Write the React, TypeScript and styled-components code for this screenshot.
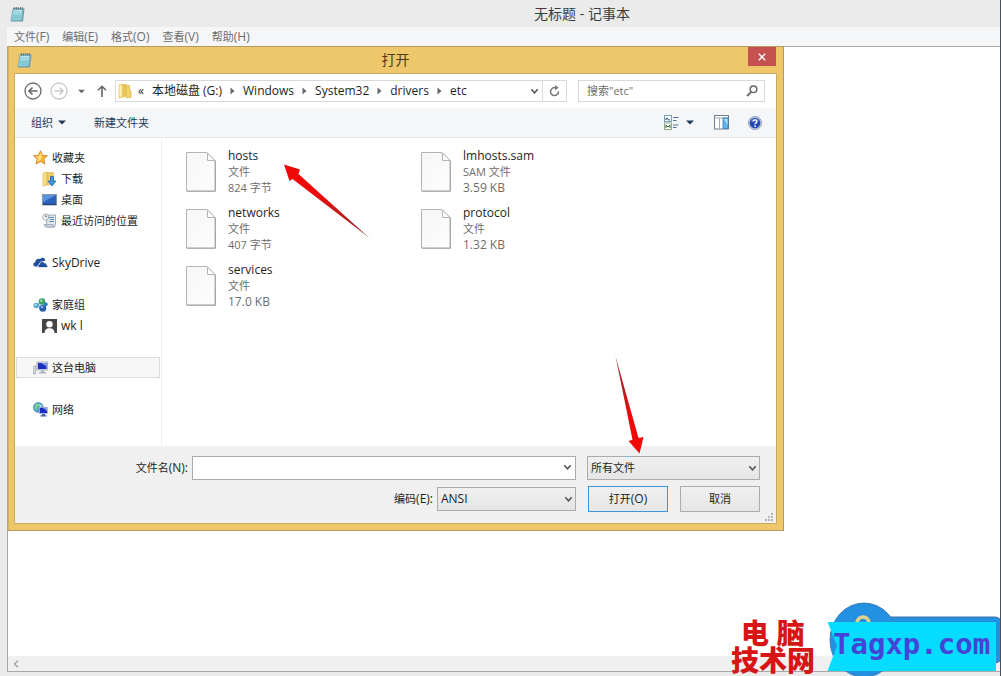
import React from "react";
import styled, { createGlobalStyle } from "styled-components";

const GlobalStyle = createGlobalStyle`
  *, *::before, *::after { box-sizing: border-box; }
  body {
    margin: 0;
    font-family: "Open Sans", "Noto Sans CJK SC", sans-serif;
    font-size: 12px;
    line-height: 16px;
    color: #1e1e1e;
  }
  button, input, select { font: inherit; color: inherit; margin: 0; }
  svg { display: block; flex: none; }
  ul { list-style: none; margin: 0; padding: 0; }
  h1, h2 { margin: 0; font-weight: 400; font-size: 14px; }
`;

/* ---------- Notepad window ---------- */

const Desktop = styled.div`
  position: relative;
  display: flex;
  flex-direction: column;
  min-height: 100vh;
  padding: 0 0 4px 7px;
  background: #ebebeb;
  border-right: 1px solid #4a5058;
  overflow: hidden;
`;

const WindowTitle = styled.header`
  display: grid;
  grid-template-columns: 154px 1fr;
  align-items: center;
  height: 27px;
  padding-left: 3px;
  h1 { text-align: center; color: #3c3c3c; line-height: 26px; }
`;

const MenuBar = styled.nav`
  display: flex;
  gap: 13px;
  height: 19px;
  padding-left: 7px;
  background: #f5f6f7;
`;

const MenuItem = styled.button`
  padding: 0;
  border: 0;
  background: none;
  color: #6d6d6d;
  font-size: 11px;
  line-height: 19px;
`;

const Key = styled.span`
  font-size: 12px;
`;

const Editor = styled.main`
  flex: 1;
  display: flex;
  flex-direction: column;
  justify-content: flex-end;
  background: #fff;
  border: 1px solid #a8a8a8;
  border-right: 0;
`;

const ScrollBar = styled.div`
  display: flex;
  align-items: center;
  height: 15px;
  padding-left: 5px;
  background: #f0f0f0;
`;

/* ---------- Open dialog ---------- */

const Dialog = styled.section`
  position: absolute;
  top: 46px;
  left: 8px;
  width: min(776px, calc(100% - 16px));
  padding: 0 7px 7px 6px;
  background: #efc76b;
  border: 1px solid #b39a5e;
  border-left-color: #d6b25f;
`;

const DialogTitle = styled.header`
  display: grid;
  grid-template-columns: 28px 1fr 28px;
  height: 26px;
  h2 { text-align: center; line-height: 26px; color: #4a3a12; }
`;

const TitleIcon = styled.span`
  display: flex;
  align-items: center;
  padding-left: 2px;
`;

const CloseButton = styled.button`
  display: flex;
  align-items: center;
  justify-content: center;
  height: 19px;
  padding: 0;
  border: 0;
  background: #c75050;
`;

const Client = styled.div`
  background: #fff;
  border: 1px solid #c9aa62;
  margin: 0 -1px -1px;
`;

const AddressRow = styled.div`
  display: flex;
  align-items: center;
  height: 34px;
  padding: 0 11px 0 8px;
`;

const IconButton = styled.button<{ $w: number }>`
  display: flex;
  align-items: center;
  justify-content: center;
  width: ${(p) => p.$w}px;
  height: 20px;
  padding: 0;
  border: 0;
  background: none;
`;

const AddressBox = styled.div`
  flex: 1;
  display: flex;
  align-items: center;
  height: 22px;
  margin-left: 4px;
  border: 1px solid #d9d9d9;
  padding-left: 2px;
`;

const Crumbs = styled.ol`
  flex: 1;
  display: flex;
  align-items: center;
  margin: 0;
  padding: 0 0 0 6px;
  list-style: none;
  li { display: flex; align-items: center; }
`;

const Crumb = styled.a`
  padding: 0 8px;
  color: #1e1e1e;
  text-decoration: none;
  white-space: nowrap;
`;

const RefreshButton = styled(IconButton)`
  border-left: 1px solid #d9d9d9;
`;

const SearchBox = styled.label`
  display: flex;
  align-items: center;
  width: 187px;
  height: 22px;
  margin-left: 11px;
  padding: 0 6px 0 8px;
  border: 1px solid #d9d9d9;
  input {
    flex: 1;
    min-width: 0;
    padding: 0;
    border: 0;
    outline: 0;
    background: none;
    font-size: 11px;
  }
  input::placeholder { color: #6d6d6d; opacity: 1; }
`;

const ToolBar = styled.div`
  display: flex;
  align-items: center;
  height: 30px;
  padding: 0 14px 0 16px;
  background: #f5f6f7;
  border-bottom: 1px solid #e8e9eb;
`;

const ToolButton = styled.button`
  display: flex;
  align-items: center;
  gap: 5px;
  margin-right: 28px;
  padding: 0;
  border: 0;
  background: none;
  color: #1e395b;
  font-size: 11px;
`;

const ToolGroup = styled.div`
  display: flex;
  align-items: center;
  margin-left: auto;
`;

const Body = styled.div`
  display: flex;
  min-height: 308px;
`;

const SideBar = styled.nav`
  width: 147px;
  padding-top: 9px;
  border-right: 1px solid #f0f0f0;
`;

const SideGroup = styled.ul`
  & + & { margin-top: 21px; }
`;

const SideItem = styled.a<{ $level?: number; $selected?: boolean; $latin?: boolean }>`
  display: flex;
  align-items: center;
  gap: 4px;
  height: 21px;
  margin: 0 1px;
  padding-left: ${(p) => (p.$level ? 26 : 17)}px;
  color: #1e1e1e;
  font-size: ${(p) => (p.$latin ? 12 : 11)}px;
  text-decoration: none;
  white-space: nowrap;
  outline: ${(p) => (p.$selected ? "1px solid #dcdcdc" : "none")};
  outline-offset: -1px;
  background: ${(p) => (p.$selected ? "#f7f7f7" : "none")};
`;

const FileGrid = styled.ul`
  flex: 1;
  display: grid;
  grid-template-columns: repeat(auto-fill, 234px);
  grid-auto-rows: 51px;
  gap: 6px 1px;
  padding: 8px 0 0 24px;
`;

const FileTile = styled.li`
  display: flex;
  align-items: center;
  gap: 12px;
`;

const FileText = styled.div`
  line-height: 16px;
`;

const FileMeta = styled.div<{ $han?: boolean }>`
  height: 16px;
  color: #6d6d6d;
  font-size: ${(p) => (p.$han ? 11 : 12)}px;
`;

const Footer = styled.form`
  display: flex;
  flex-direction: column;
  gap: 6px;
  padding: 10px 16px 11px 0;
  background: #f0f0f0;
`;

const FooterRow = styled.div`
  display: flex;
  align-items: center;
  justify-content: flex-end;
`;

const FieldLabel = styled.label<{ $w: number }>`
  width: ${(p) => p.$w}px;
  margin-right: 4px;
  text-align: right;
  font-size: 11px;
  white-space: nowrap;
`;

const Combo = styled.div`
  flex: 1;
  display: flex;
  height: 24px;
  background: #fff;
  border: 1px solid #ababab;
  input { flex: 1; min-width: 0; border: 0; outline: 0; padding: 0 3px; background: none; }
`;

const SelectBox = styled.div<{ $w: number; $han?: boolean }>`
  position: relative;
  width: ${(p) => p.$w}px;
  height: 24px;
  select {
    width: 100%;
    height: 100%;
    padding: 0 3px;
    appearance: none;
    border: 1px solid #acacac;
    border-radius: 0;
    background: linear-gradient(#f0f0f0, #e5e5e5);
    font-size: ${(p) => (p.$han ? 11 : 12)}px;
  }
  svg { position: absolute; right: 3px; top: 9px; pointer-events: none; }
`;

const Actions = styled.div`
  display: flex;
  gap: 12px;
`;

const ActionButton = styled.button<{ $primary?: boolean }>`
  width: 80px;
  height: 26px;
  padding: 0;
  border: 1px solid ${(p) => (p.$primary ? "#3c96dc" : "#acacac")};
  background: linear-gradient(#f0f0f0, #e5e5e5);
  font-size: 11px;
`;

const Spacer = styled.span<{ $w: number }>`
  flex: none;
  width: ${(p) => p.$w}px;
`;

const Grip = styled.svg`
  position: absolute;
  right: 9px;
  bottom: 8px;
`;

const Pointers = styled.svg`
  position: absolute;
  top: -1px;
  left: -1px;
  pointer-events: none;
`;

/* ---------- Site badge ---------- */

const SiteBadge = styled.aside`
  position: absolute;
  right: 0;
  bottom: 0;
  display: flex;
  align-items: flex-end;
`;

const SiteName = styled.div`
  margin-right: 13px;
  padding-bottom: 1px;
  color: #d81414;
  font-family: "Liberation Sans", "Noto Sans CJK SC", sans-serif;
  font-size: 28px;
  font-weight: 900;
  line-height: 27px;
  text-align: center;
`;

const SiteUrl = styled.div`
  position: relative;
  width: 172px;
  height: 74px;
  > svg { position: absolute; inset: 0; }
  > span {
    position: relative;
    display: block;
    padding: 25px 0 0 5px;
    color: #4444d6;
    font: bold 29px/34px "DejaVu Sans Mono", monospace;
  }
`;

/* ---------- Drawings ---------- */

const NotepadIcon = () => (
  <svg width="16" height="16" viewBox="0 0 16 16">
    <path d="M3 2.500h11.500L13 15.500H1z" fill="#6f9aa3" />
    <path d="M3 2.500h10.400L11.600 14.500H.8z" fill="#8fd0dd" stroke="#6ba4b2" strokeWidth=".6" />
    <path d="M4 4h8l-.6 4.500H3.300z" fill="#b9e6ee" />
    <path d="M3.800 6h7.800M3.500 8h7.800M3.200 10h7.800M2.900 12h7.800" stroke="#6bb2c3" strokeWidth=".6" />
    <path d="M4.300 1v3M6.300 1v3M8.300 1v3M10.300 1v3M12.300 1v3" stroke="#5d6d70" strokeWidth=".9" />
  </svg>
);

const RoundArrow = ({ flip, color }: { flip?: boolean; color: string }) => (
  <svg width="18" height="18" viewBox="0 0 18 18" fill="none" stroke={color}>
    <circle cx="9" cy="9" r="8" strokeWidth="1.300" />
    <path d={flip ? "M4.500 9h8.500M9.500 5.500L13 9l-3.500 3.500" : "M13.500 9H5M8.500 5.500L5 9l3.500 3.500"} strokeWidth="1.700" />
  </svg>
);

const Caret = ({ color = "#1e395b", w = 8 }: { color?: string; w?: number }) => (
  <svg width={w} height="5" viewBox="0 0 8 5"><path d="M0 .5h8L4 4.500z" fill={color} /></svg>
);

const UpArrow = () => (
  <svg width="10" height="12" viewBox="0 0 10 12" fill="none" stroke="#666" strokeWidth="1.600">
    <path d="M5 12V1.500M1 5.300l4-4 4 4" />
  </svg>
);

const Chevron = () => (
  <svg width="9" height="7" viewBox="0 0 9 7" fill="none" stroke="#555" strokeWidth="1.600">
    <path d="M1.300 1.300l3.200 3.600 3.200-3.600" />
  </svg>
);

const Separator = () => (
  <svg width="5" height="8" viewBox="0 0 5 8"><path d="M.5.5L4.500 4 .5 7.500z" fill="#666" /></svg>
);

const FolderIcon = () => (
  <svg width="14" height="16" viewBox="0 0 14 16">
    <path d="M1 2l4-1v13l-4 1z" fill="#f7e08a" stroke="#d6b048" strokeWidth=".6" />
    <path d="M5 1h3.500v12.500L5 14.500z" fill="#e9c455" />
    <path d="M8.500 2.500h3.200V8H13v6.500H8l.5-1z" fill="#f3d570" stroke="#cfa93f" strokeWidth=".6" />
    <path d="M1.600 3l1.500-.4V13l-1.500.6z" fill="#fdf3bf" />
  </svg>
);

const RefreshIcon = () => (
  <svg width="11" height="12" viewBox="0 0 11 12" fill="none" stroke="#777">
    <path d="M6.500 2.700A4 4 0 1 0 9.500 6.200" strokeWidth="1.500" />
    <path d="M6 0l3.500 2.700L6 5.600z" fill="#777" stroke="none" />
  </svg>
);

const SearchIcon = () => (
  <svg width="12" height="12" viewBox="0 0 12 12" fill="none" stroke="#666">
    <circle cx="7.500" cy="4.300" r="3.300" strokeWidth="1.500" />
    <path d="M5.200 6.800L1 11" strokeWidth="1.800" />
  </svg>
);

const ViewIcon = () => (
  <svg width="15" height="15" viewBox="0 0 15 15">
    <rect x=".5" y=".5" width="7" height="6" fill="#fff" stroke="#7ea3bf" />
    <path d="M2 5V3.500h1.500L4.500 5H6" stroke="#1d3f73" fill="none" />
    <rect x=".5" y="8" width="7" height="6.500" fill="#fff" stroke="#8fae86" />
    <path d="M2 13v-3l2 2 2-2v3" stroke="#3b5c30" fill="none" />
    <path d="M9 2.500h5.500M9 5.500h3.500M9 10h5.500M9 12.500h3.500" stroke="#53779b" />
  </svg>
);

const PaneIcon = () => (
  <svg width="15" height="15" viewBox="0 0 15 15">
    <rect x=".5" y=".5" width="14" height="13.500" fill="#fff" stroke="#6e7e90" />
    <path d="M1 3h13M5.500 3v11" stroke="#a0abb8" />
    <rect x="9" y="3" width="5" height="10.500" fill="#5db6ec" stroke="#3a7db5" strokeWidth=".8" />
    <path d="M10 4h3.500v6z" fill="#b8e2fa" />
  </svg>
);

const HelpIcon = () => (
  <svg width="14" height="14" viewBox="0 0 14 14">
    <circle cx="7" cy="7" r="6.500" fill="#c8d2e4" stroke="#6b7fae" strokeWidth=".7" />
    <circle cx="7" cy="7" r="5.300" fill="#2448ae" />
    <path d="M3 5.500a4.200 4.200 0 0 1 8 0z" fill="#5a80d8" />
    <path d="M5.200 5.600c0-2.300 3.700-2.200 3.700 0 0 1.300-1.800 1.300-1.800 2.700" stroke="#fff" strokeWidth="1.400" fill="none" />
    <circle cx="7.100" cy="10.200" r=".9" fill="#fff" />
  </svg>
);

const StarIcon = () => (
  <svg width="15" height="15" viewBox="0 0 15 15">
    <path d="M7.500.8l2.100 4.500 4.900.5-3.700 3.300 1.100 5-4.400-2.600-4.400 2.600 1.100-5L.5 5.800l4.900-.5z" fill="#f9b233" stroke="#cf7b1a" strokeWidth=".8" />
    <path d="M7.500 2.500L9 6l-1.500 4L4 12l1-3.500-2.500-2L6 6z" fill="#ffdc7c" />
  </svg>
);

const DownloadIcon = () => (
  <svg width="15" height="16" viewBox="0 0 15 16">
    <path d="M1 2l4-1v13l-4 1z" fill="#f7e08a" stroke="#d6b048" strokeWidth=".6" />
    <path d="M5 1.500h6.500V13L5 14z" fill="#eccb66" stroke="#cfa93f" strokeWidth=".5" />
    <path d="M8.500 5.500h3v4.500H14l-4 5-4-5h2.500z" fill="#3f96dd" stroke="#1d64ae" strokeWidth=".8" />
  </svg>
);

const DesktopIcon = () => (
  <svg width="15" height="12" viewBox="0 0 15 12">
    <rect x=".5" y=".5" width="14" height="10.500" fill="#2b62bd" stroke="#8497ab" />
    <path d="M1 1h13L1 8z" fill="#5c93e0" />
    <path d="M1 10.300h13" stroke="#1d3a70" />
  </svg>
);

const RecentIcon = () => (
  <svg width="15" height="15" viewBox="0 0 15 15">
    <path d="M4 2h9.500v9l-1 3H5z" fill="#e3e9ee" stroke="#8a99a6" strokeWidth=".8" />
    <path d="M2 11.500h9l1 2.500H3.500z" fill="#cbd5dd" stroke="#8a99a6" strokeWidth=".7" />
    <path d="M7 4.500h5M8 6.500h4M7 8.500h5" stroke="#5f8db8" />
    <circle cx="3.700" cy="4" r="3.100" fill="#f5f8fa" stroke="#8f9ba6" strokeWidth=".8" />
    <path d="M3.700 2v2h1.500" stroke="#555" strokeWidth=".8" fill="none" />
  </svg>
);

const CloudIcon = () => (
  <svg width="15" height="11" viewBox="0 0 15 11">
    <path d="M2.500 9.500C-.4 9.300-.3 5.700 2.200 5.300 2.300 2.500 5.200 1 7.200 2.300 8.500 0 12 .4 12.300 3.500L7 5.500 5 9.500z" fill="#1f4f9e" />
    <path d="M6.500 10.500c-2.200-.2-2-3 0-3.200C6.700 4.300 10.300 3.700 11.300 6c1.500-.5 2.400.6 2.200 1.700 1.800.3 1.700 2.600 0 2.800z" fill="#1f4f9e" stroke="#fff" strokeWidth=".7" />
  </svg>
);

const HomeGroupIcon = () => (
  <svg width="15" height="14" viewBox="0 0 15 14">
    <path d="M4 7l6-3.500M4 7l6 4" stroke="#8fb6d6" strokeWidth="2" />
    <circle cx="3.200" cy="7.500" r="2.800" fill="#58a9d8" />
    <circle cx="9" cy="3.500" r="3.300" fill="#3fa06a" />
    <circle cx="9.800" cy="10.200" r="3.500" fill="#2b5fae" />
    <circle cx="12.700" cy="6.300" r="2" fill="#2f7fc1" />
    <circle cx="8.300" cy="2.600" r="1.200" fill="#a9e3b0" />
    <circle cx="2.600" cy="6.700" r="1" fill="#c4ecfa" />
    <circle cx="9" cy="9" r="1.200" fill="#8fbdf0" />
  </svg>
);

const UserIcon = () => (
  <svg width="15" height="14" viewBox="0 0 15 14">
    <rect width="15" height="14" fill="#454545" />
    <circle cx="7.500" cy="5.300" r="3.200" fill="#fff" />
    <path d="M2.500 14c.3-3.500 2-4.700 5-4.700s4.700 1.200 5 4.700z" fill="#fff" />
  </svg>
);

const PcIcon = () => (
  <svg width="15" height="14" viewBox="0 0 15 14">
    <path d="M.7 5.500l2-.8v8l-2 .5z" fill="#e5e8eb" stroke="#8a949e" strokeWidth=".7" />
    <rect x="4" y="1" width="10.500" height="8" fill="#dfe4ea" stroke="#8a94a8" strokeWidth=".7" />
    <rect x="5" y="2" width="8.500" height="6" fill="#1b2cc0" />
    <path d="M8 2h5.500v3.500z" fill="#7f9bf0" />
    <path d="M8 9.500h3V11h2v1.500H6V11h2z" fill="#aab3bd" />
  </svg>
);

const NetworkIcon = () => (
  <svg width="15" height="15" viewBox="0 0 15 15">
    <circle cx="5.300" cy="5.500" r="4.900" fill="#4aa3d0" stroke="#2a7ba6" strokeWidth=".6" />
    <path d="M2 3c2-2.500 4-1.500 4 0S3.500 5 4 7 2 8 1.500 6z" fill="#7fcf8a" />
    <path d="M6 2l3 1.500-2 2z" fill="#c9eefa" />
    <rect x="6.300" y="5.300" width="8.200" height="6.200" fill="#1b2cc0" stroke="#b9c4dc" strokeWidth=".8" />
    <path d="M10 6h4v3z" fill="#7f9bf0" />
    <path d="M9 12h3v1.300h1.500v1.200h-6v-1.200H9z" fill="#4460a8" />
  </svg>
);

const FileIcon = () => (
  <svg width="30" height="40" viewBox="0 0 30 40">
    <defs>
      <linearGradient id="paper" x1="0" y1="0" x2="1" y2="1">
        <stop offset="0" stopColor="#f6f6f6" />
        <stop offset="1" stopColor="#fdfdfd" />
      </linearGradient>
    </defs>
    <path d="M.5.5h20.500l8 8v30.500H.5z" fill="url(#paper)" stroke="#b4b4b4" />
    <path d="M21.500 1v7.500H29z" fill="#fff" stroke="#b4b4b4" />
    <path d="M1 39.300h28.500V9" fill="none" stroke="#999" strokeWidth=".8" />
  </svg>
);

/* ---------- Data ---------- */

const menus = [["文件", "F"], ["编辑", "E"], ["格式", "O"], ["查看", "V"], ["帮助", "H"]];
const path = ["本地磁盘 (G:)", "Windows", "System32", "drivers", "etc"];

type Place = { name: string; icon: React.ReactNode; level?: number; selected?: boolean; latin?: boolean };
const places: Place[][] = [
  [
    { name: "收藏夹", icon: <StarIcon /> },
    { name: "下载", icon: <DownloadIcon />, level: 1 },
    { name: "桌面", icon: <DesktopIcon />, level: 1 },
    { name: "最近访问的位置", icon: <RecentIcon />, level: 1 },
  ],
  [{ name: "SkyDrive", icon: <CloudIcon />, latin: true }],
  [
    { name: "家庭组", icon: <HomeGroupIcon /> },
    { name: "wk l", icon: <UserIcon />, level: 1, latin: true },
  ],
  [{ name: "这台电脑", icon: <PcIcon />, selected: true }],
  [{ name: "网络", icon: <NetworkIcon /> }],
];

const files = [
  { name: "hosts", type: "文件", size: "824 字节" },
  { name: "lmhosts.sam", type: "SAM 文件", size: "3.59 KB" },
  { name: "networks", type: "文件", size: "407 字节" },
  { name: "protocol", type: "文件", size: "1.32 KB" },
  { name: "services", type: "文件", size: "17.0 KB" },
];

export default function App() {
  return (
    <Desktop>
      <GlobalStyle />
      <WindowTitle>
        <NotepadIcon />
        <h1>无标题 - 记事本</h1>
      </WindowTitle>
      <MenuBar>
        {menus.map(([name, key]) => (
          <MenuItem key={key}>{name}<Key>({key})</Key></MenuItem>
        ))}
      </MenuBar>
      <Editor>
        <ScrollBar>
          <svg width="6" height="8" viewBox="0 0 6 8" fill="none" stroke="#a5a5a5" strokeWidth="1.500">
            <path d="M5 .8L1.500 4 5 7.200" />
          </svg>
        </ScrollBar>
      </Editor>

      <Dialog role="dialog" aria-labelledby="dialog-title">
        <DialogTitle>
          <TitleIcon><NotepadIcon /></TitleIcon>
          <h2 id="dialog-title">打开</h2>
          <CloseButton aria-label="关闭">
            <svg width="8" height="8" viewBox="0 0 8 8" stroke="#fff" strokeWidth="1.400">
              <path d="M.8.8l6.400 6.400M7.200.8L.8 7.200" />
            </svg>
          </CloseButton>
        </DialogTitle>
        <Client>
          <AddressRow>
            <IconButton $w={20} aria-label="后退"><RoundArrow color="#6a6a6a" /></IconButton>
            <Spacer $w={6} />
            <IconButton $w={20} aria-label="前进"><RoundArrow flip color="#c9c9c9" /></IconButton>
            <IconButton $w={24} aria-label="最近位置"><Caret color="#666" w={7} /></IconButton>
            <IconButton $w={18} aria-label="上移"><UpArrow /></IconButton>
            <AddressBox>
              <FolderIcon />
              <Crumbs>
                <li>«</li>
                {path.map((name, i) => (
                  <li key={name}>
                    {i > 0 && <Separator />}
                    <Crumb href="#">{name}</Crumb>
                  </li>
                ))}
              </Crumbs>
              <IconButton $w={16} aria-label="历史"><Chevron /></IconButton>
              <RefreshButton $w={24} aria-label="刷新"><RefreshIcon /></RefreshButton>
            </AddressBox>
            <SearchBox>
              <input type="search" aria-label="搜索" placeholder={'搜索"etc"'} />
              <SearchIcon />
            </SearchBox>
          </AddressRow>

          <ToolBar>
            <ToolButton>组织<Caret /></ToolButton>
            <ToolButton>新建文件夹</ToolButton>
            <ToolGroup>
              <IconButton $w={16} aria-label="视图"><ViewIcon /></IconButton>
              <IconButton $w={22} aria-label="更多选项"><Caret /></IconButton>
              <Spacer $w={12} />
              <IconButton $w={16} aria-label="预览窗格"><PaneIcon /></IconButton>
              <Spacer $w={19} />
              <IconButton $w={14} aria-label="帮助"><HelpIcon /></IconButton>
            </ToolGroup>
          </ToolBar>

          <Body>
            <SideBar>
              {places.map((group) => (
                <SideGroup key={group[0].name}>
                  {group.map((p) => (
                    <li key={p.name}>
                      <SideItem href="#" $level={p.level} $selected={p.selected} $latin={p.latin}>
                        {p.icon}
                        {p.name}
                      </SideItem>
                    </li>
                  ))}
                </SideGroup>
              ))}
            </SideBar>
            <FileGrid>
              {files.map((f) => (
                <FileTile key={f.name}>
                  <FileIcon />
                  <FileText>
                    <div>{f.name}</div>
                    <FileMeta $han>{f.type}</FileMeta>
                    <FileMeta $han={f.size.endsWith("字节")}>{f.size}</FileMeta>
                  </FileText>
                </FileTile>
              ))}
            </FileGrid>
          </Body>

          <Footer onSubmit={(e) => e.preventDefault()}>
            <FooterRow>
              <FieldLabel $w={173} htmlFor="file-name">文件名<Key>(N):</Key></FieldLabel>
              <Combo>
                <input id="file-name" type="text" />
                <IconButton $w={15} type="button" aria-label="文件名列表"><Chevron /></IconButton>
              </Combo>
              <Spacer $w={11} />
              <SelectBox $w={173} $han>
                <select aria-label="文件类型"><option>所有文件</option></select>
                <Chevron />
              </SelectBox>
            </FooterRow>
            <FooterRow>
              <FieldLabel $w={60} htmlFor="encoding">编码<Key>(E):</Key></FieldLabel>
              <SelectBox $w={139}>
                <select id="encoding"><option>ANSI</option></select>
                <Chevron />
              </SelectBox>
              <Spacer $w={12} />
              <Actions>
                <ActionButton $primary type="submit">打开<Key>(O)</Key></ActionButton>
                <ActionButton type="button">取消</ActionButton>
              </Actions>
            </FooterRow>
          </Footer>
        </Client>
        <Grip width="9" height="9" viewBox="0 0 9 9" fill="#b4b4b4">
          <path d="M6 0h2v2H6zM3 3h2v2H3zM6 3h2v2H6zM0 6h2v2H0zM3 6h2v2H3zM6 6h2v2H6z" />
        </Grip>
        <Pointers width="700" height="450" viewBox="8 46 700 450">
          <defs>
            <linearGradient id="shaft1" gradientUnits="userSpaceOnUse" x1="369" y1="238" x2="315" y2="192">
              <stop offset="0" stopColor="#8d3030" />
              <stop offset="1" stopColor="#f00808" />
            </linearGradient>
            <linearGradient id="shaft2" gradientUnits="userSpaceOnUse" x1="616" y1="356" x2="630" y2="420">
              <stop offset="0" stopColor="#8d3030" />
              <stop offset="1" stopColor="#f00808" />
            </linearGradient>
          </defs>
          <path d="M284 164.500L300 169.500l-1.500 4.500L369.500 238 292.500 179l-3 2z" fill="url(#shaft1)" />
          <path d="M615.500 356L638.500 438l5-1-4 16.500L628.500 441l4-1.300z" fill="url(#shaft2)" />
        </Pointers>
      </Dialog>

      <SiteBadge>
        <SiteName>
          <div>电 脑</div>
          <div>技术网</div>
        </SiteName>
        <SiteUrl>
          <svg width="172" height="74" viewBox="828 602 172 74">
            <rect x="880" y="617" width="122" height="46" rx="7" fill="#2390e2" stroke="#4577a5" />
            <ellipse cx="864" cy="640" rx="34" ry="37" fill="#2390e2" stroke="#3a7fb5" />
            <circle cx="863" cy="623" r="6" fill="none" stroke="#e3d28b" strokeWidth="3.500" />
            <path d="M827.500 622H996v49H827.500l9.500-25z" fill="#05dcff" />
          </svg>
          <span>Tagxp.com</span>
        </SiteUrl>
      </SiteBadge>
    </Desktop>
  );
}
